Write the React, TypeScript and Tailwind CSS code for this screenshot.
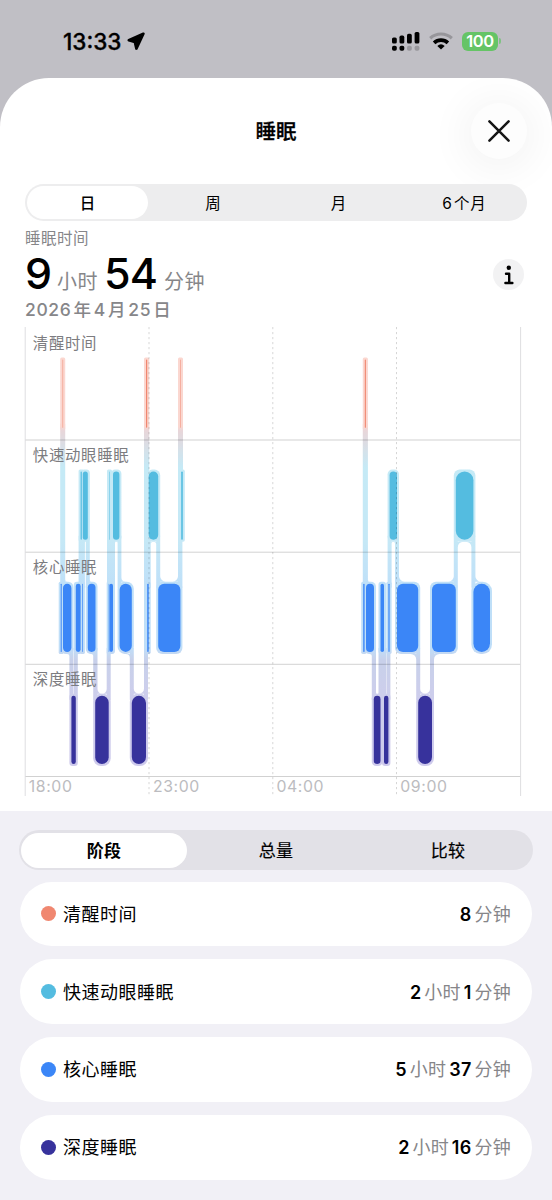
import React from 'react';
import { clsx } from 'clsx';

type Stage = 'awake' | 'rem' | 'core' | 'deep';

interface Segment {
  stage: Stage;
  start: number;
  end: number;
  faint?: boolean;
}

const STAGES: Record<Stage, { label: string; color: string; top: number }> = {
  awake: { label: '清醒时间', color: '#f08770', top: 359.5 },
  rem: { label: '快速动眼睡眠', color: '#54bce0', top: 471.5 },
  core: { label: '核心睡眠', color: '#3b86f7', top: 583.7 },
  deep: { label: '深度睡眠', color: '#37329c', top: 695.8 },
};

const BAR_HEIGHT = 68.2;
const PAD = 2;

const nights: Segment[][] = [
  [
    { stage: 'core', start: 60.7, end: 61.7 },
    { stage: 'awake', start: 62.2, end: 63.2, faint: true },
    { stage: 'core', start: 63, end: 71.4 },
    { stage: 'deep', start: 71.4, end: 75.8 },
    { stage: 'core', start: 75.8, end: 80.6 },
    { stage: 'rem', start: 80.6, end: 81.8 },
    { stage: 'core', start: 82.2, end: 82.9 },
    { stage: 'rem', start: 82.8, end: 87.8 },
    { stage: 'core', start: 87.8, end: 95.5 },
    { stage: 'deep', start: 95.2, end: 108.7 },
    { stage: 'core', start: 108.7, end: 109.2 },
    { stage: 'rem', start: 109, end: 110, faint: true },
    { stage: 'core', start: 109.4, end: 113 },
    { stage: 'rem', start: 113, end: 119.4 },
    { stage: 'core', start: 119.6, end: 131.8 },
    { stage: 'deep', start: 131.8, end: 146 },
    { stage: 'awake', start: 146, end: 147.2 },
    { stage: 'core', start: 147.2, end: 148.7 },
    { stage: 'rem', start: 148.7, end: 158.2 },
    { stage: 'core', start: 158.2, end: 180.4 },
    { stage: 'awake', start: 180, end: 181, faint: true },
    { stage: 'rem', start: 181.2, end: 182.8 },
  ],
  [
    { stage: 'core', start: 363.2, end: 364.6 },
    { stage: 'awake', start: 364.8, end: 365.9 },
    { stage: 'core', start: 366, end: 374 },
    { stage: 'deep', start: 373.8, end: 380.5 },
    { stage: 'core', start: 380.5, end: 384 },
    { stage: 'deep', start: 384, end: 388.4 },
    { stage: 'core', start: 388.4, end: 389.6 },
    { stage: 'rem', start: 389.6, end: 397 },
    { stage: 'core', start: 397, end: 418.2 },
    { stage: 'deep', start: 418.2, end: 432 },
    { stage: 'core', start: 432, end: 455.8 },
    { stage: 'rem', start: 455.8, end: 473.4 },
    { stage: 'core', start: 473.4, end: 490 },
  ],
];

function cornerRadius(width: number) {
  return width < 19 ? width / 2 : 6;
}

function filletRadius(seg: Segment) {
  return Math.max(0, Math.min(5.5, (seg.end - seg.start - PAD * 2) / 2));
}

// Vertical strip between two neighbouring segments, with rounded inner corners
function connectorPath(a: Segment, b: Segment) {
  const aIsUpper = STAGES[a.stage].top < STAGES[b.stage].top;
  const upper = aIsUpper ? a : b;
  const lower = aIsUpper ? b : a;
  const left = b.start - PAD;
  const right = a.end + PAD;
  const y1 = STAGES[upper.stage].top + BAR_HEIGHT + PAD;
  const y2 = STAGES[lower.stage].top - PAD;
  const ru = filletRadius(upper);
  const rl = filletRadius(lower);

  let d = `M${left} ${y1 - 6}H${right}V${y2 + 6}H${left}Z`;
  if (aIsUpper) {
    d += `M${left} ${y1}h${-ru}a${ru} ${ru} 0 0 1 ${ru} ${ru}z`;
    d += `M${right} ${y2}h${rl}a${rl} ${rl} 0 0 1 ${-rl} ${-rl}z`;
  } else {
    d += `M${right} ${y1}h${ru}a${ru} ${ru} 0 0 0 ${-ru} ${ru}z`;
    d += `M${left} ${y2}h${-rl}a${rl} ${rl} 0 0 0 ${rl} ${-rl}z`;
  }
  return d;
}

const Night: React.FC<{ segments: Segment[] }> = ({ segments }) => (
  <g>
    <g fill="url(#halo)" opacity={0.9}>
      {segments.map((s, i) => (
        <rect
          key={i}
          x={s.start - PAD}
          y={STAGES[s.stage].top - PAD}
          width={s.end - s.start + PAD * 2}
          height={BAR_HEIGHT + PAD * 2}
          rx={cornerRadius(s.end - s.start + PAD)}
        />
      ))}
      {segments.slice(1).map((s, i) => (
        <path key={i} d={connectorPath(segments[i], s)} />
      ))}
    </g>
    {segments.map((s, i) => (
      <rect
        key={i}
        x={s.start}
        y={STAGES[s.stage].top}
        width={s.end - s.start}
        height={BAR_HEIGHT}
        rx={cornerRadius(s.end - s.start)}
        fill={STAGES[s.stage].color}
        opacity={s.faint ? 0.5 : 1}
      />
    ))}
  </g>
);

const SleepChart = () => (
  <svg width="552" height="474" viewBox="0 325 552 474" className="block shrink-0 font-['Inter','Noto_Sans_CJK_SC',sans-serif]">
    <defs>
      <linearGradient id="halo" gradientUnits="userSpaceOnUse" x1="0" y1="357" x2="0" y2="767">
        <stop offset="0" stopColor="#fbd3cb" />
        <stop offset="0.17" stopColor="#fad3cc" />
        <stop offset="0.18" stopColor="#e6d2d6" />
        <stop offset="0.27" stopColor="#bfe8f6" />
        <stop offset="0.45" stopColor="#bfe6f6" />
        <stop offset="0.55" stopColor="#b9ddf8" />
        <stop offset="0.71" stopColor="#b9dbf8" />
        <stop offset="0.74" stopColor="#c3cce8" />
        <stop offset="0.84" stopColor="#c9c8ea" />
        <stop offset="1" stopColor="#c9c5ea" />
      </linearGradient>
    </defs>

    {nights.map((segments, i) => (
      <Night key={i} segments={segments} />
    ))}

    {Object.values(STAGES).map((s) => (
      <text key={s.label} x="32.8" y={s.top - 11} fontSize="15.4" letterSpacing="0.7" fill="#7c7c80">
        {s.label}
      </text>
    ))}

    <g stroke="#000" strokeOpacity="0.18" strokeWidth="1">
      {[440, 552.2, 664.3, 776.5].map((y) => (
        <line key={y} x1="25" x2="521" y1={y} y2={y} />
      ))}
    </g>
    <g stroke="#dedee1" strokeWidth="1">
      <line x1="25.2" x2="25.2" y1="327" y2="796" />
      <line x1="520.6" x2="520.6" y1="327" y2="796" />
    </g>
    <g stroke="#000" strokeOpacity="0.16" strokeWidth="1" strokeDasharray="2.2 2.8">
      {[149, 272.8, 396.5].map((x) => (
        <line key={x} x1={x} x2={x} y1="327" y2="796" />
      ))}
    </g>

    <g fontSize="15.8" letterSpacing="0.6" fill="#bcbcc0">
      <text x="28.8" y="792">18:00</text>
      <text x="153" y="792">23:00</text>
      <text x="276.5" y="792">04:00</text>
      <text x="400.3" y="792">09:00</text>
    </g>
  </svg>
);

const StatusBar = () => (
  <div className="flex h-[78px] items-start justify-between pl-[63px] pr-[51px] pt-[29px]">
    <div className="flex h-6 items-center gap-[3px]">
      <span className="w-[61px] whitespace-nowrap pt-px text-[22.5px] font-medium leading-6 [-webkit-text-stroke:0.3px_#000]">13:33</span>
      <svg width="19" height="18" viewBox="0 0 19 18">
        <path
          d="M16.4 1.8 1.8 8.3 7.8 10 9.4 16.6Z"
          fill="#000"
          stroke="#000"
          strokeWidth="2.6"
          strokeLinejoin="round"
        />
      </svg>
    </div>
    <div className="flex h-6 items-center">
      <svg width="28" height="20" viewBox="0 0 28 20">
        <rect x="0" y="6.5" width="4.8" height="6" rx="1.6" />
        <rect x="7.5" y="4.6" width="4.8" height="7.9" rx="1.6" />
        <rect x="15" y="2.8" width="4.8" height="9.7" rx="1.6" />
        <rect x="22.6" y="1" width="4.8" height="11.5" rx="1.6" />
        <rect x="0" y="14.8" width="4.8" height="5" rx="1.8" />
        <rect x="7.5" y="14.8" width="4.8" height="5" rx="1.8" />
        <rect x="15" y="14.8" width="4.8" height="5" rx="1.8" fill="#99989d" />
        <rect x="22.6" y="14.8" width="4.8" height="5" rx="1.8" fill="#99989d" />
      </svg>
      <svg width="24" height="18" viewBox="0 0 24 18" className="ml-[9px]" fill="none" strokeWidth="3.2">
        <path d="M1.2 6.2a16 16 0 0 1 21.6 0" stroke="#97969b" />
        <path d="M5.1 10.9a10 10 0 0 1 13.8 0" stroke="#000" strokeWidth="3.6" />
        <path d="M12 17.6 8.3 14a5.6 5.6 0 0 1 7.4 0z" fill="#000" />
      </svg>
      <div className="ml-[9px] flex h-[19px] w-[36px] items-center justify-center rounded-[6px] bg-[#65c466] text-[16.5px] font-semibold leading-none tracking-[-0.4px] text-white">
        100
      </div>
      <div className="ml-px h-[6px] w-[2px] rounded-r-full bg-[#7fc283]" />
    </div>
  </div>
);

const rangeTabs = ['日', '周', '月', '6 个月'];
const dateParts = ['2026', '年', '4', '月', '25', '日'];
const detailTabs = ['阶段', '总量', '比较'];

const totals: { stage: Stage; hours?: number; minutes: number }[] = [
  { stage: 'awake', minutes: 8 },
  { stage: 'rem', hours: 2, minutes: 1 },
  { stage: 'core', hours: 5, minutes: 37 },
  { stage: 'deep', hours: 2, minutes: 16 },
];

export default function App() {
  return (
    <div className="h-[1200px] w-[552px] overflow-hidden bg-[#c0bfc5] font-['Inter','Noto_Sans_CJK_SC',sans-serif] text-black">
      <StatusBar />
      <div className="flex h-[1122px] flex-col overflow-hidden rounded-t-[49px] bg-white">
        <header className="grid h-[106px] shrink-0 grid-cols-[1fr_auto_1fr] items-center px-[25px]">
          <span />
          <h1 className="pt-[3px] text-[20.5px] font-medium leading-none [-webkit-text-stroke:0.3px_#000]">睡眠</h1>
          <button className="flex h-14 w-14 items-center justify-center justify-self-end rounded-full bg-[#fdfdfd] shadow-[0_4px_38px_10px_rgba(0,0,0,0.045)]">
            <svg width="24" height="24" viewBox="0 0 24 24" stroke="#161616" strokeWidth="2.5" strokeLinecap="round">
              <path d="M2.4 2.4 21.6 21.6M21.6 2.4 2.4 21.6" />
            </svg>
          </button>
        </header>

        <div className="ml-[25px] flex h-[37px] w-[502px] shrink-0 items-center rounded-full bg-[#ededee] p-[2px]">
          {rangeTabs.map((tab, i) => (
            <button
              key={tab}
              className={clsx(
                'h-[33px] w-[121px] rounded-full pl-px pt-[2px] text-[15.5px] leading-none tracking-[0.9px] [word-spacing:-4px]',
                i === 0 ? 'bg-white font-medium' : 'ml-[4.5px]'
              )}
            >
              {tab}
            </button>
          ))}
        </div>

        <section className="flex h-[104px] shrink-0 items-start justify-between pl-[25px] pr-[28px] pt-[8px] text-[#868689]">
          <div>
            <div className="h-5 text-[15.5px] leading-5 tracking-[0.5px]">睡眠时间</div>
            <div className="flex h-[50px] items-baseline whitespace-nowrap leading-[48px]">
              <span className="text-[43px] font-medium text-black">9</span>
              <span className="ml-[5px] text-[20px] tracking-[0.5px]">小时</span>
              <span className="ml-[6px] text-[43px] font-medium tracking-[-1px] text-black">54</span>
              <span className="ml-[7px] text-[20px] tracking-[0.5px]">分钟</span>
            </div>
            <div className="flex h-5 gap-[2.2px] whitespace-nowrap pt-px text-[17.5px] font-medium leading-5 tracking-[0.6px]">
              {dateParts.map((part) => (
                <span key={part}>{part}</span>
              ))}
            </div>
          </div>
          <button className="mt-[30px] flex h-[31px] w-[31px] items-center justify-center rounded-full bg-[#f2f2f3]">
            <svg width="10" height="20" viewBox="0 0 10 20" fill="none" stroke="#000" strokeWidth="2.4" strokeLinecap="round" strokeLinejoin="round">
              <circle cx="4.8" cy="2.7" r="2.2" fill="#000" stroke="none" />
              <path d="M2 8.8h3.2v9M1.4 18h7" />
            </svg>
          </button>
        </section>

        <SleepChart />

        <div className="mt-[12px] flex flex-1 flex-col bg-[#f1f0f6] pl-5 pr-5 pt-[19px]">
          <div className="-ml-px flex h-[40px] w-[514px] shrink-0 items-center rounded-full bg-[#e2e1e7] p-[2px]">
            {detailTabs.map((tab, i) => (
              <button
                key={tab}
                className={clsx(
                  'h-[35px] w-[166px] rounded-full pt-[2px] text-[17px] leading-none tracking-[0.2px]',
                  i === 0 ? 'bg-white font-bold' : 'ml-[6px] font-normal [-webkit-text-stroke:0.2px_#000]'
                )}
              >
                {tab}
              </button>
            ))}
          </div>

          <ul className="mt-[11.5px] flex flex-col gap-[13px]">
            {totals.map((row) => (
              <li key={row.stage} className="flex h-[64.8px] items-center justify-between rounded-full bg-white px-[21px]">
                <div className="flex items-center gap-[7px]">
                  <span className="h-[15px] w-[15px] rounded-full" style={{ backgroundColor: STAGES[row.stage].color }} />
                  <span className="pt-px text-[18px] tracking-[0.5px]">{STAGES[row.stage].label}</span>
                </div>
                <div className="flex items-baseline gap-[2.8px] pt-px text-[18px] tracking-[0.3px] text-[#868689]">
                  {row.hours && (
                    <>
                      <span className="font-semibold text-black">{row.hours}</span>
                      <span>小时</span>
                    </>
                  )}
                  <span className="font-semibold text-black">{row.minutes}</span>
                  <span>分钟</span>
                </div>
              </li>
            ))}
          </ul>
        </div>
      </div>
    </div>
  );
}
